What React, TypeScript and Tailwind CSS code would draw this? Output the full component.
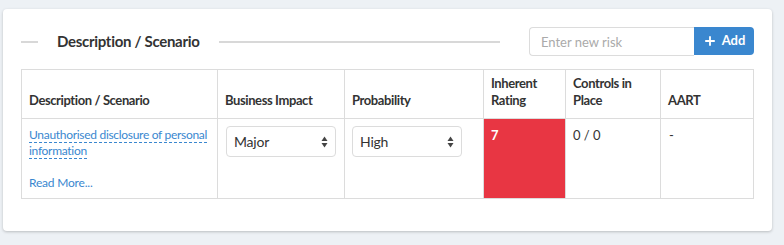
import { Plus } from "lucide-react";

const font = { fontFamily: '"Lato", "Liberation Sans", sans-serif' };

function SelectBox({ value }: { value: string }) {
  return (
    <div className="flex h-[31px] w-[110px] items-center justify-between rounded-[4px] border border-[#dcdcdc] bg-white pl-[7px] pr-[7px] text-[14px] leading-[16px] tracking-[-0.2px] text-[#333]">
      <span>{value}</span>
      {/* up / down arrows */}
      <svg width="7" height="12" viewBox="0 0 7 12" aria-hidden="true">
        <path d="M3.5 0.5 L6.5 5 L0.5 5 Z" fill="#444" />
        <path d="M3.5 11.5 L6.5 7 L0.5 7 Z" fill="#444" />
      </svg>
    </div>
  );
}

export default function App() {
  return (
    <div className="h-[245px] w-[784px] bg-[#edf1f5] pl-[3px] pt-[9px]" style={font}>
      <div className="w-[769px] rounded-[4px] bg-white px-[18px] pb-[32px] pt-[18px] shadow-[0_1px_3px_rgba(0,0,0,0.22)]">
        {/* Heading row */}
        <div className="flex h-[29px] items-center">
          <div className="h-[2px] w-[17px] bg-[#d8d8d8]" />
          <h2 className="ml-[19px] text-[15px] font-bold tracking-[-0.3px] text-[#333]">Description / Scenario</h2>
          <div className="ml-[19px] h-[2px] w-[281px] bg-[#d8d8d8]" />
          <div className="ml-auto flex h-[29px]">
            <input
              placeholder="Enter new risk"
              className="h-[29px] w-[165px] rounded-l-[4px] border border-r-0 border-[#dcdcdc] pl-[11px] text-[13px] text-[#333] outline-none placeholder:text-[#aaa]"
              style={font}
            />
            <button className="flex h-[28px] w-[60px] items-center justify-center gap-[5px] rounded-r-[4px] bg-[#3a87cf] text-[13px] font-bold text-white">
              <Plus size={14} strokeWidth={3.2} />
              Add
            </button>
          </div>
        </div>

        {/* Table */}
        <table className="mt-[13px] w-[732px] table-fixed border-collapse text-[13px] leading-[16px] text-[#333]">
          <colgroup>
            <col className="w-[196px]" />
            <col className="w-[127px]" />
            <col className="w-[139px]" />
            <col className="w-[82px]" />
            <col className="w-[95px]" />
            <col className="w-[93px]" />
          </colgroup>
          <thead>
            <tr className="h-[49px]">
              {["Description / Scenario", "Business Impact", "Probability", "Inherent Rating", "Controls in Place", "AART"].map((h) => (
                <th
                  key={h}
                  className="border border-[#dcdcdc] px-[7px] pb-[9px] text-left align-bottom font-bold leading-[17px] tracking-[-0.4px]"
                >
                  {h}
                </th>
              ))}
            </tr>
          </thead>
          <tbody>
            <tr className="h-[79px]">
              <td className="border border-[#dcdcdc] px-[7px] pt-[8px] align-top text-[12px] leading-[16px]">
                <a className="cursor-pointer border-b border-dashed border-[#3a87cf] tracking-[-0.3px] text-[#3a87cf]">
                  Unauthorised disclosure of personal information
                </a>
                <div className="mt-[16px] pb-[7px] tracking-[-0.2px] text-[#3a87cf]">Read More...</div>
              </td>
              <td className="border border-[#dcdcdc] px-[8px] pt-[7px] align-top">
                <SelectBox value="Major" />
              </td>
              <td className="border border-[#dcdcdc] px-[7px] pt-[7px] align-top">
                <SelectBox value="High" />
              </td>
              <td className="border border-[#dcdcdc] bg-[#e83643] px-[7px] pt-[8px] align-top font-bold text-white">
                7
              </td>
              <td className="border border-[#dcdcdc] px-[7px] pt-[8px] align-top">0 / 0</td>
              <td className="border border-[#dcdcdc] px-[8px] pt-[8px] align-top">-</td>
            </tr>
          </tbody>
        </table>
      </div>
    </div>
  );
}
